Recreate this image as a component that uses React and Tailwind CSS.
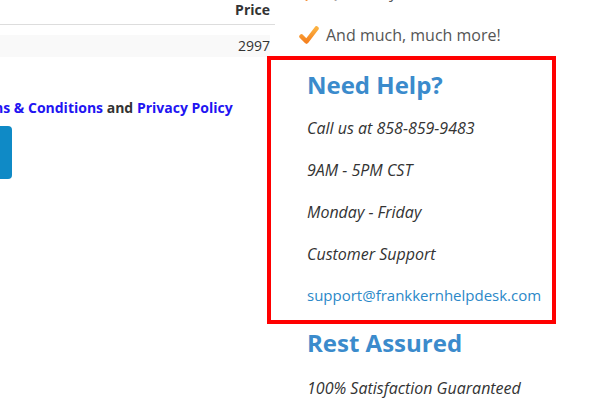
import React from 'react';

const CheckMark = () => (
  <svg width="20" height="19" viewBox="0 0 20 19" className="shrink-0">
    <defs>
      <linearGradient id="chk" x1="0" y1="0" x2="0" y2="1">
        <stop offset="0" stopColor="#fbb040" />
        <stop offset="1" stopColor="#f58220" />
      </linearGradient>
    </defs>
    <path
      d="M2.5 10.5 L7.5 15.5 L17.5 2.5"
      fill="none"
      stroke="url(#chk)"
      strokeWidth="4.5"
      strokeLinecap="round"
      strokeLinejoin="round"
    />
  </svg>
);

const helpLines = ['Call us at 858-859-9483', '9AM - 5PM CST', 'Monday - Friday', 'Customer Support'];

export default function App() {
  return (
    <div
      className="w-[596px] h-[415px] overflow-hidden bg-white text-[#333]"
      style={{ fontFamily: '"Open Sans", "Liberation Sans", sans-serif' }}
    >
      <div className="grid grid-cols-[267px_289px]">
        {/* left column: order table + terms */}
        <div className="min-w-0">
          <div className="w-[275px]">
            <div className="h-[25px] border-b border-[#dddddd] pr-[5px] text-right text-[14px] font-bold leading-[20px]">
              Price
            </div>
            <div className="mt-[10px] mr-[5px] h-[22px] bg-[#f9f9f9] text-right text-[14px] leading-[22px]">
              2997
            </div>
          </div>

          <p className="mt-[41px] -ml-[130px] whitespace-nowrap text-[14px] font-bold leading-[20px]">
            I agree to the <a className="text-[#2214f2]">Terms &amp; Conditions</a> and{' '}
            <a className="text-[#2214f2]">Privacy Policy</a>
          </p>

          <button className="mt-[8px] -ml-[148px] block h-[53px] w-[160px] rounded-[4px] bg-[#0f8ac6]" />
        </div>

        {/* right column: features + help box */}
        <div className="min-w-0">
          <ul className="-mt-[20px] flex flex-col gap-[19px] pl-[32px] text-[16px] leading-[24px] text-[#555]">
            <li className="flex items-center gap-[7px]">
              <CheckMark />
              <span>Quarterly bonuses</span>
            </li>
            <li className="flex items-center gap-[7px]">
              <CheckMark />
              <span>And much, much more!</span>
            </li>
          </ul>

          <div className="mt-[9px] border-4 border-[#ff0000] pl-[36px] pt-[9px] pb-[14px]">
            <h3 className="text-[24px] font-bold leading-[32px] text-[#3b8bcc]">Need Help?</h3>
            <div className="mt-[16px] flex flex-col gap-[20px] text-[16px] leading-[22px]">
              {helpLines.map(line => (
                <p key={line} className="italic text-[#333]">
                  {line}
                </p>
              ))}
              <a className="-mt-[1px] text-[15px] text-[#2b88c8]">support@frankkernhelpdesk.com</a>
            </div>
          </div>

          <div className="pl-[40px]">
            <h3 className="mt-[3px] text-[24px] font-bold leading-[32px] text-[#3b8bcc]">Rest Assured</h3>
            <p className="mt-[18px] text-[16px] italic leading-[22px]">100% Satisfaction Guaranteed</p>
          </div>
        </div>
      </div>
    </div>
  );
}
